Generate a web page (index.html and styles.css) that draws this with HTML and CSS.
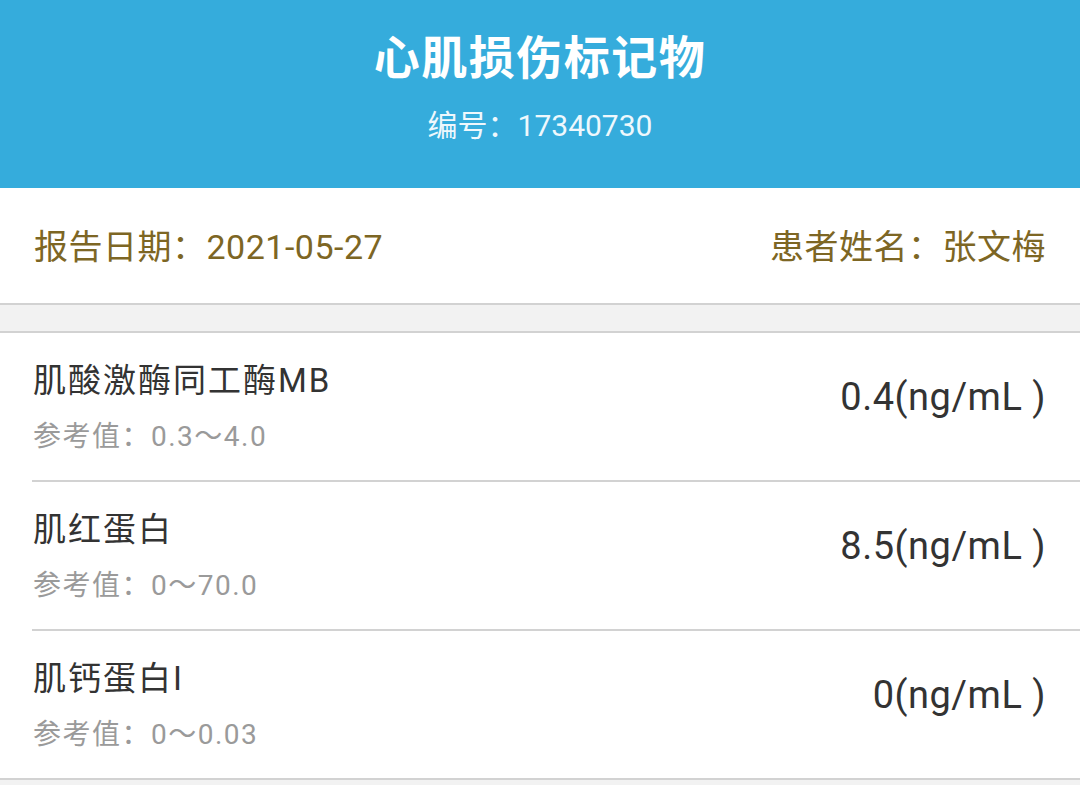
FILE: index.html
```html
<!DOCTYPE html>
<html lang="zh-CN">
<head>
<meta charset="utf-8">
<title>心肌损伤标记物</title>
<link rel="stylesheet" href="styles.css">
</head>
<body>
<div class="page">
  <header class="hero">
    <h1 class="hero-title">心肌损伤标记物</h1>
    <div class="hero-sub">编号：17340730</div>
  </header>
  <section class="info">
    <span class="info-item">报告日期：2021-05-27</span>
    <span class="info-item">患者姓名：张文梅</span>
  </section>
  <div class="band"></div>
  <section class="list">
    <div class="row">
      <div class="row-left">
        <div class="row-name">肌酸激酶同工酶MB</div>
        <div class="row-ref">参考值：0.3～4.0</div>
      </div>
      <div class="row-value">0.4(ng/mL )</div>
    </div>
    <div class="row">
      <div class="row-left">
        <div class="row-name">肌红蛋白</div>
        <div class="row-ref">参考值：0～70.0</div>
      </div>
      <div class="row-value">8.5(ng/mL )</div>
    </div>
    <div class="row row-last">
      <div class="row-left">
        <div class="row-name">肌钙蛋白I</div>
        <div class="row-ref">参考值：0～0.03</div>
      </div>
      <div class="row-value">0(ng/mL )</div>
    </div>
  </section>
</div>
</body>
</html>
```

FILE: styles.css
```css
* { box-sizing: border-box; margin: 0; padding: 0; }
html, body { width: 1080px; height: 785px; overflow: hidden; }
body {
  background: #f2f2f2;
  font-family: Roboto, "Noto Sans CJK SC", sans-serif;
}
.page { display: flex; flex-direction: column; }

.hero {
  background: #35acdc;
  height: 188px;
  padding-top: 30px;
  display: flex;
  flex-direction: column;
  align-items: center;
  color: #fff;
}
.hero-title {
  font-size: 46px;
  line-height: 56px;
  font-weight: 700;
  letter-spacing: 1.5px;
}
.hero-sub {
  margin-top: 22px;
  font-size: 30px;
  line-height: 36px;
  color: #eef8fd;
}

.info {
  background: #fff;
  height: 117px;
  padding: 39px 34px 0;
  display: flex;
  justify-content: space-between;
  border-bottom: 2px solid #d2d2d2;
}
.info-item {
  font-size: 34px;
  line-height: 40px;
  color: #7d6624;
  letter-spacing: 0.5px;
}

.band {
  height: 28px;
  background: #f2f2f2;
  border-bottom: 2px solid #d2d2d2;
}

.list { background: #fff; padding-left: 32px; }
.row {
  height: 149px;
  padding: 28px 34px 0 0;
  display: flex;
  justify-content: space-between;
  border-bottom: 2px solid #d2d2d2;
}
.row-last { margin-left: -32px; padding-left: 32px; }
.row-left { display: flex; flex-direction: column; padding-left: 1px; }
.row-name {
  font-size: 33px;
  line-height: 40px;
  color: #333;
  letter-spacing: 2px;
}
.row-ref {
  margin-top: 18px;
  font-size: 28px;
  line-height: 36px;
  color: #9a9a9a;
  letter-spacing: 1.5px;
}
.row-value {
  align-self: center;
  margin-bottom: 48px;
  font-size: 38px;
  line-height: 44px;
  color: #333;
  letter-spacing: 0.5px;
}
```
